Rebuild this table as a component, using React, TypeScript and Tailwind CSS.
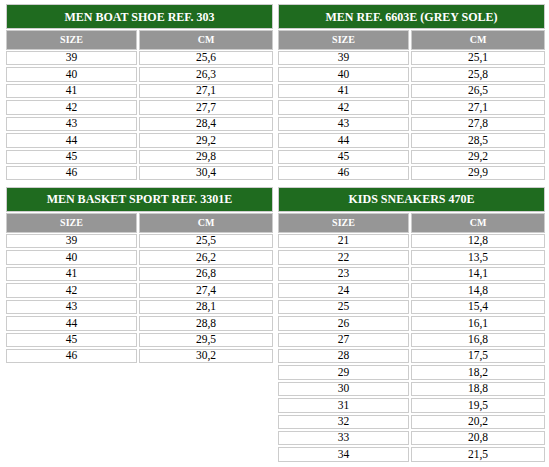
import React from "react";

type Row = [string, string];

const boat: Row[] = [
  ["39", "25,6"], ["40", "26,3"], ["41", "27,1"], ["42", "27,7"],
  ["43", "28,4"], ["44", "29,2"], ["45", "29,8"], ["46", "30,4"],
];
const grey: Row[] = [
  ["39", "25,1"], ["40", "25,8"], ["41", "26,5"], ["42", "27,1"],
  ["43", "27,8"], ["44", "28,5"], ["45", "29,2"], ["46", "29,9"],
];
const basket: Row[] = [
  ["39", "25,5"], ["40", "26,2"], ["41", "26,8"], ["42", "27,4"],
  ["43", "28,1"], ["44", "28,8"], ["45", "29,5"], ["46", "30,2"],
];
const kids: Row[] = [
  ["21", "12,8"], ["22", "13,5"], ["23", "14,1"], ["24", "14,8"],
  ["25", "15,4"], ["26", "16,1"], ["27", "16,8"], ["28", "17,5"],
  ["29", "18,2"], ["30", "18,8"], ["31", "19,5"], ["32", "20,2"],
  ["33", "20,8"], ["34", "21,5"],
];

function SizeTable({ title, rows }: { title: string; rows: Row[] }) {
  return (
    <div className="flex flex-col w-[267px]">
      <div className="h-[25px] border border-[#cccccc] bg-[#1f6b1f] flex items-center justify-center text-white font-bold text-[12px] leading-none">
        {title}
      </div>
      <div className="mt-[1px] flex gap-[2px]">
        <div className="w-[131px] h-[20px] border border-[#cccccc] bg-[#969696] flex items-center justify-center text-white font-bold text-[10px] leading-none">
          SIZE
        </div>
        <div className="flex-1 h-[20px] border border-[#cccccc] bg-[#969696] flex items-center justify-center text-white font-bold text-[10px] leading-none">
          CM
        </div>
      </div>
      <div className="mt-[1px] flex flex-col gap-[2px]">
        {rows.map(([s, c]) => (
          <div key={s} className="flex gap-[2px]">
            <div className="w-[131px] h-[14.43px] border border-[#cccccc] flex items-center justify-center text-black text-[11.5px] leading-none">
              {s}
            </div>
            <div className="flex-1 h-[14.43px] border border-[#cccccc] flex items-center justify-center text-black text-[11.5px] leading-none">
              {c}
            </div>
          </div>
        ))}
      </div>
    </div>
  );
}

export default function App() {
  return (
    <div className="w-[549px] h-[467px] bg-white pl-[6px] pt-[4px] overflow-hidden font-['Liberation_Serif','Times_New_Roman',serif]">
      <div className="grid grid-cols-[267px_267px] gap-x-[5px] gap-y-[6.6px] items-start">
        <SizeTable title="MEN BOAT SHOE REF. 303" rows={boat} />
        <SizeTable title="MEN REF. 6603E (GREY SOLE)" rows={grey} />
        <SizeTable title="MEN BASKET SPORT REF. 3301E" rows={basket} />
        <SizeTable title="KIDS SNEAKERS 470E" rows={kids} />
      </div>
    </div>
  );
}
